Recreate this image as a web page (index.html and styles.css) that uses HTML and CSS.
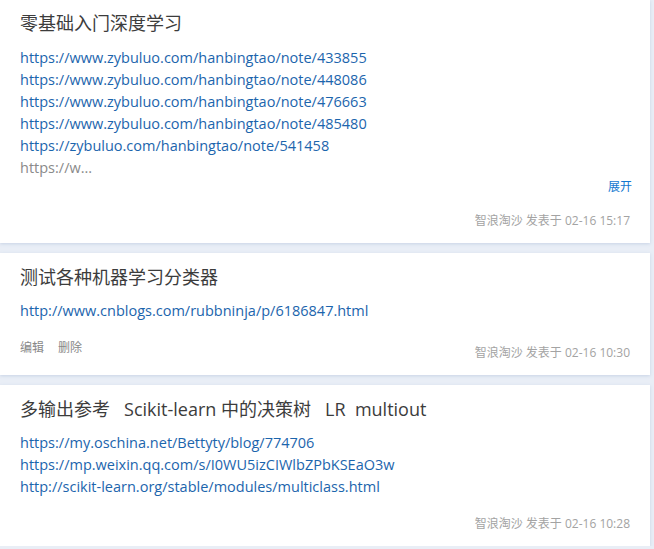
FILE: index.html
```html
<!DOCTYPE html>
<html lang="zh-CN">
<head>
<meta charset="utf-8">
<title>笔记列表</title>
<link rel="stylesheet" href="styles.css">
</head>
<body>
<div class="list">
  <div class="card">
    <div class="title">零基础入门深度学习</div>
    <div class="content">
      <a class="link" href="#">https://www.zybuluo.com/hanbingtao/note/433855</a>
      <a class="link" href="#">https://www.zybuluo.com/hanbingtao/note/448086</a>
      <a class="link" href="#">https://www.zybuluo.com/hanbingtao/note/476663</a>
      <a class="link" href="#">https://www.zybuluo.com/hanbingtao/note/485480</a>
      <a class="link" href="#">https://zybuluo.com/hanbingtao/note/541458</a>
      <div class="more-text">https://w...</div>
    </div>
    <div class="expand-row"><a class="expand" href="#">展开</a></div>
    <div class="footer">
      <span class="meta">智浪淘沙 发表于 02-16 15:17</span>
    </div>
  </div>

  <div class="card">
    <div class="title">测试各种机器学习分类器</div>
    <div class="content">
      <a class="link" href="#">http://www.cnblogs.com/rubbninja/p/6186847.html</a>
    </div>
    <div class="footer">
      <div class="ops"><a href="#">编辑</a><a href="#">删除</a></div>
      <span class="meta meta-low">智浪淘沙 发表于 02-16 10:30</span>
    </div>
  </div>

  <div class="card">
    <div class="title">多输出参考&nbsp;&nbsp; Scikit-learn 中的决策树&nbsp;&nbsp; LR&nbsp; multiout</div>
    <div class="content">
      <a class="link" href="#">https://my.oschina.net/Bettyty/blog/774706</a>
      <a class="link" href="#">https://mp.weixin.qq.com/s/I0WU5izCIWlbZPbKSEaO3w</a>
      <a class="link" href="#">http://scikit-learn.org/stable/modules/multiclass.html</a>
    </div>
    <div class="footer">
      <span class="meta">智浪淘沙 发表于 02-16 10:28</span>
    </div>
  </div>
</div>
</body>
</html>
```

FILE: styles.css
```css
html, body {
  margin: 0;
  padding: 0;
  background: #e9eef6;
}
body {
  font-family: "Open Sans", "Noto Sans CJK SC", sans-serif;
  color: #333;
}
.list {
  display: flex;
  flex-direction: column;
  gap: 10px;
  padding-right: 4px;
}
.card {
  background: #fff;
  padding: 11px 20px 14px 20px;
  box-shadow: 0 1px 3px rgba(160, 180, 210, 0.45);
}
.card + .card .title {
  padding-top: 1px;
  margin-bottom: -1px;
}
.title {
  font-size: 18px;
  line-height: 24px;
  color: #3c3c3c;
  white-space: nowrap;
}
.content {
  margin-top: 12px;
  display: flex;
  flex-direction: column;
  align-items: flex-start;
}
.link {
  font-size: 14.5px;
  line-height: 22px;
  color: #1c65ad;
  text-decoration: none;
}
.more-text {
  font-size: 14.5px;
  line-height: 22px;
  color: #8a8a8a;
}
.expand-row {
  display: flex;
  justify-content: flex-end;
  margin-right: -2px;
}
.expand {
  font-size: 12px;
  line-height: 16px;
  color: #1478d0;
  text-decoration: none;
}
.footer {
  margin-top: 18px;
  display: flex;
  justify-content: flex-end;
  align-items: flex-start;
}
.ops {
  margin-right: auto;
  display: flex;
  gap: 14px;
}
.ops a {
  font-size: 12px;
  line-height: 16px;
  color: #888;
  text-decoration: none;
}
.meta {
  font-size: 12px;
  line-height: 16px;
  color: #a3a3a3;
}
.meta-low {
  margin-top: 5px;
}
```
